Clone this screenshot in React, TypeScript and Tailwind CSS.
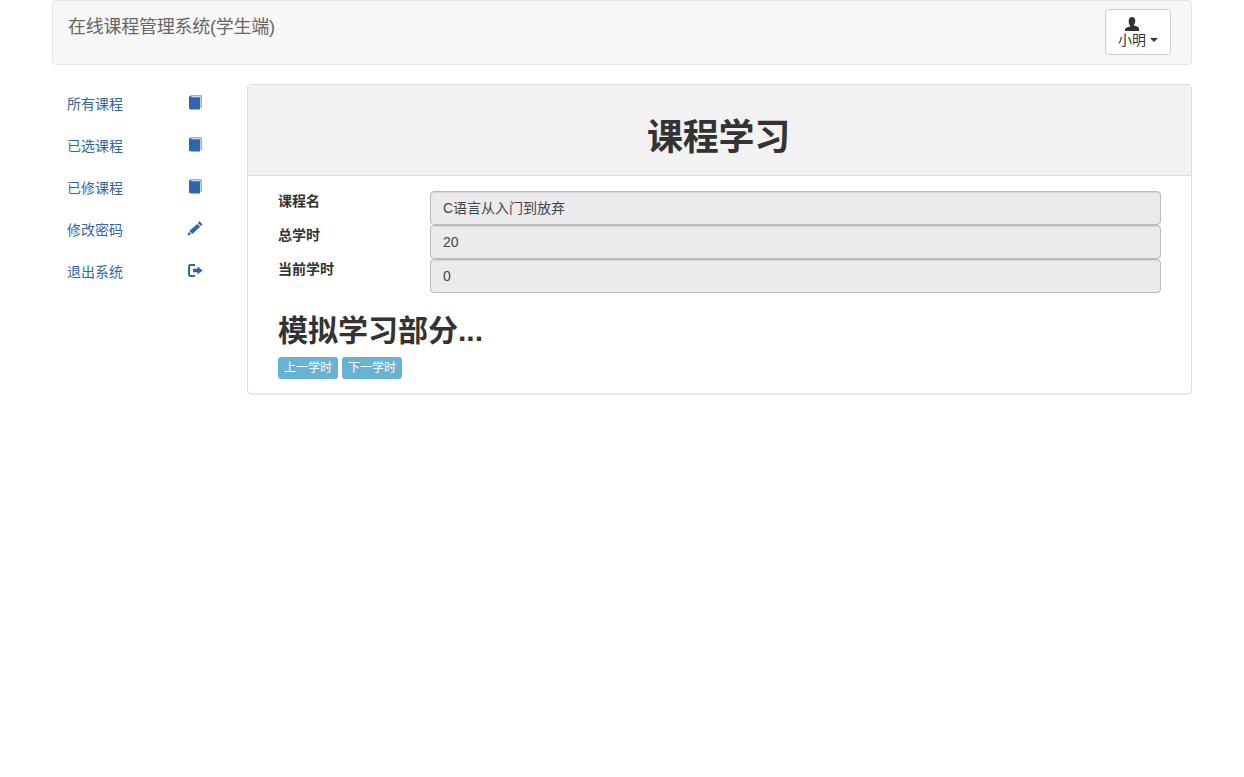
const Book = () => (
  <svg width="14" height="15" viewBox="0 0 14 15">
    <path d="M1 2.500C1 1.200 2 .4 3 .4h10.500v12.600h-.8V1.300H3.200v.9h8.800V14.600H3c-1.200 0-2-.8-2-2z" fill="#2f65ad" />
  </svg>
);
const Pencil = () => (
  <svg width="16" height="15" viewBox="0 0 16 15" className="fill-[#2f65ad]">
    <path d="M12.600.5l2.500 2.300c.3.300.3.700 0 1L13.900 5 10.900 2.200 11.900.5c.2-.2.500-.2.700 0zM10.200 3l3 2.800-7.900 7.100-3-2.800zM1.700 10.800l2.700 2.500-3.900 1.400z" />
  </svg>
);
const LogOut = () => (
  <svg width="15" height="13" viewBox="0 0 15 13" className="fill-[#2f65ad]">
    <path d="M2.500 0H7v2H3c-.6 0-1 .4-1 1v7c0 .6.400 1 1 1h4v2H2.500C1 13 0 12 0 10.500v-8C0 1 1 0 2.500 0z" />
    <path d="M9.500 2.500l5.200 4-5.200 4V8.300H5V4.700h4.500z" />
  </svg>
);
const User = () => (
  <svg width="14" height="14" viewBox="0 0 14 14" className="mr-[12px] fill-[#333]">
    <path d="M7 0c2 0 3.300 1.500 3.300 3.800 0 1.500-.6 3-1.400 3.800-.3.300-.2.800.2 1 1.800.7 4.900 1.500 4.900 3v2.400H0V12.600c0-1.500 3.100-2.300 4.900-3 .4-.2.500-.7.200-1C4.300 7.800 3.700 6.300 3.700 4.800V3.800C3.700 1.500 5 0 7 0z" />
  </svg>
);

const menu: [string, React.ReactNode][] = [
  ['所有课程', <Book />],
  ['已选课程', <Book />],
  ['已修课程', <Book />],
  ['修改密码', <Pencil />],
  ['退出系统', <LogOut />],
];

const fields = [
  ['课程名', 'C语言从入门到放弃'],
  ['总学时', '20'],
  ['当前学时', '0'],
];

export default function App() {
  return (
    <div className="min-h-[777px] bg-white text-[14px] leading-[20px] text-[#333] font-['Liberation_Sans','Noto_Sans_CJK_SC',sans-serif]">
      <div className="mx-auto w-[1140px]">
        <div className="flex h-[65px] justify-between rounded border border-[#e5e5e5] bg-[#f7f7f7] pr-5">
          <div className="pl-[15px] pt-4 text-[18px] leading-[20px] tracking-[-0.25px] text-[#666]">在线课程管理系统(学生端)</div>
          <div className="pt-2">
            <button className="flex h-[46px] w-[66px] flex-col items-center rounded border border-[#ccc] bg-white pt-[7px] text-[14px] leading-[20px] text-[#333]">
              <User />
              <span className="-mt-[1px] flex items-center">
                小明
                <span className="ml-1 h-0 w-0 border-x-4 border-t-4 border-x-transparent border-t-[#333]" />
              </span>
            </button>
          </div>
        </div>
        <div className="mt-[19px] flex">
          <ul className="w-[195px] shrink-0">
            {menu.map(([label, icon]) => (
              <li key={label} className="flex h-[42px] items-start pt-[10px] pl-[15px] text-[#36659f]">
                <span className="w-[120px]">{label}</span>
                <span className="flex h-[16px] w-[16px] items-center justify-center">{icon}</span>
              </li>
            ))}
          </ul>
          <div className="flex h-[310px] w-[945px] flex-col rounded border border-[#ddd] shadow-[0_1px_1px_rgba(0,0,0,0.05)]">
            <div className="h-[91px] border-b border-[#ddd] bg-[#f2f2f2] pt-[33px] pr-[2px] text-center text-[36px] leading-[40px] font-bold tracking-[-0.25px]">
              课程学习
            </div>
            <div className="px-[30px] pt-[15px]">
              {fields.map(([k, v]) => (
                <div key={k} className="flex h-[34px]">
                  <div className="w-[152px] font-bold">{k}</div>
                  <div className="h-[34px] w-[731px] rounded border border-[#bbb] bg-[#ebebeb] px-3 py-[6px] text-[#444] shadow-[inset_0_1px_1px_rgba(0,0,0,0.075)]">
                    {v}
                  </div>
                </div>
              ))}
              <h3 className="mt-[21px] text-[30px] leading-[33px] font-bold">模拟学习部分...</h3>
              <div className="mt-[10px] flex gap-1">
                <button className="h-[22px] w-[60px] rounded-[3px] bg-[#68b2d4] text-[12px] leading-[18px] text-white">上一学时</button>
                <button className="h-[22px] w-[60px] rounded-[3px] bg-[#68b2d4] text-[12px] leading-[18px] text-white">下一学时</button>
              </div>
            </div>
          </div>
        </div>
      </div>
    </div>
  );
}
